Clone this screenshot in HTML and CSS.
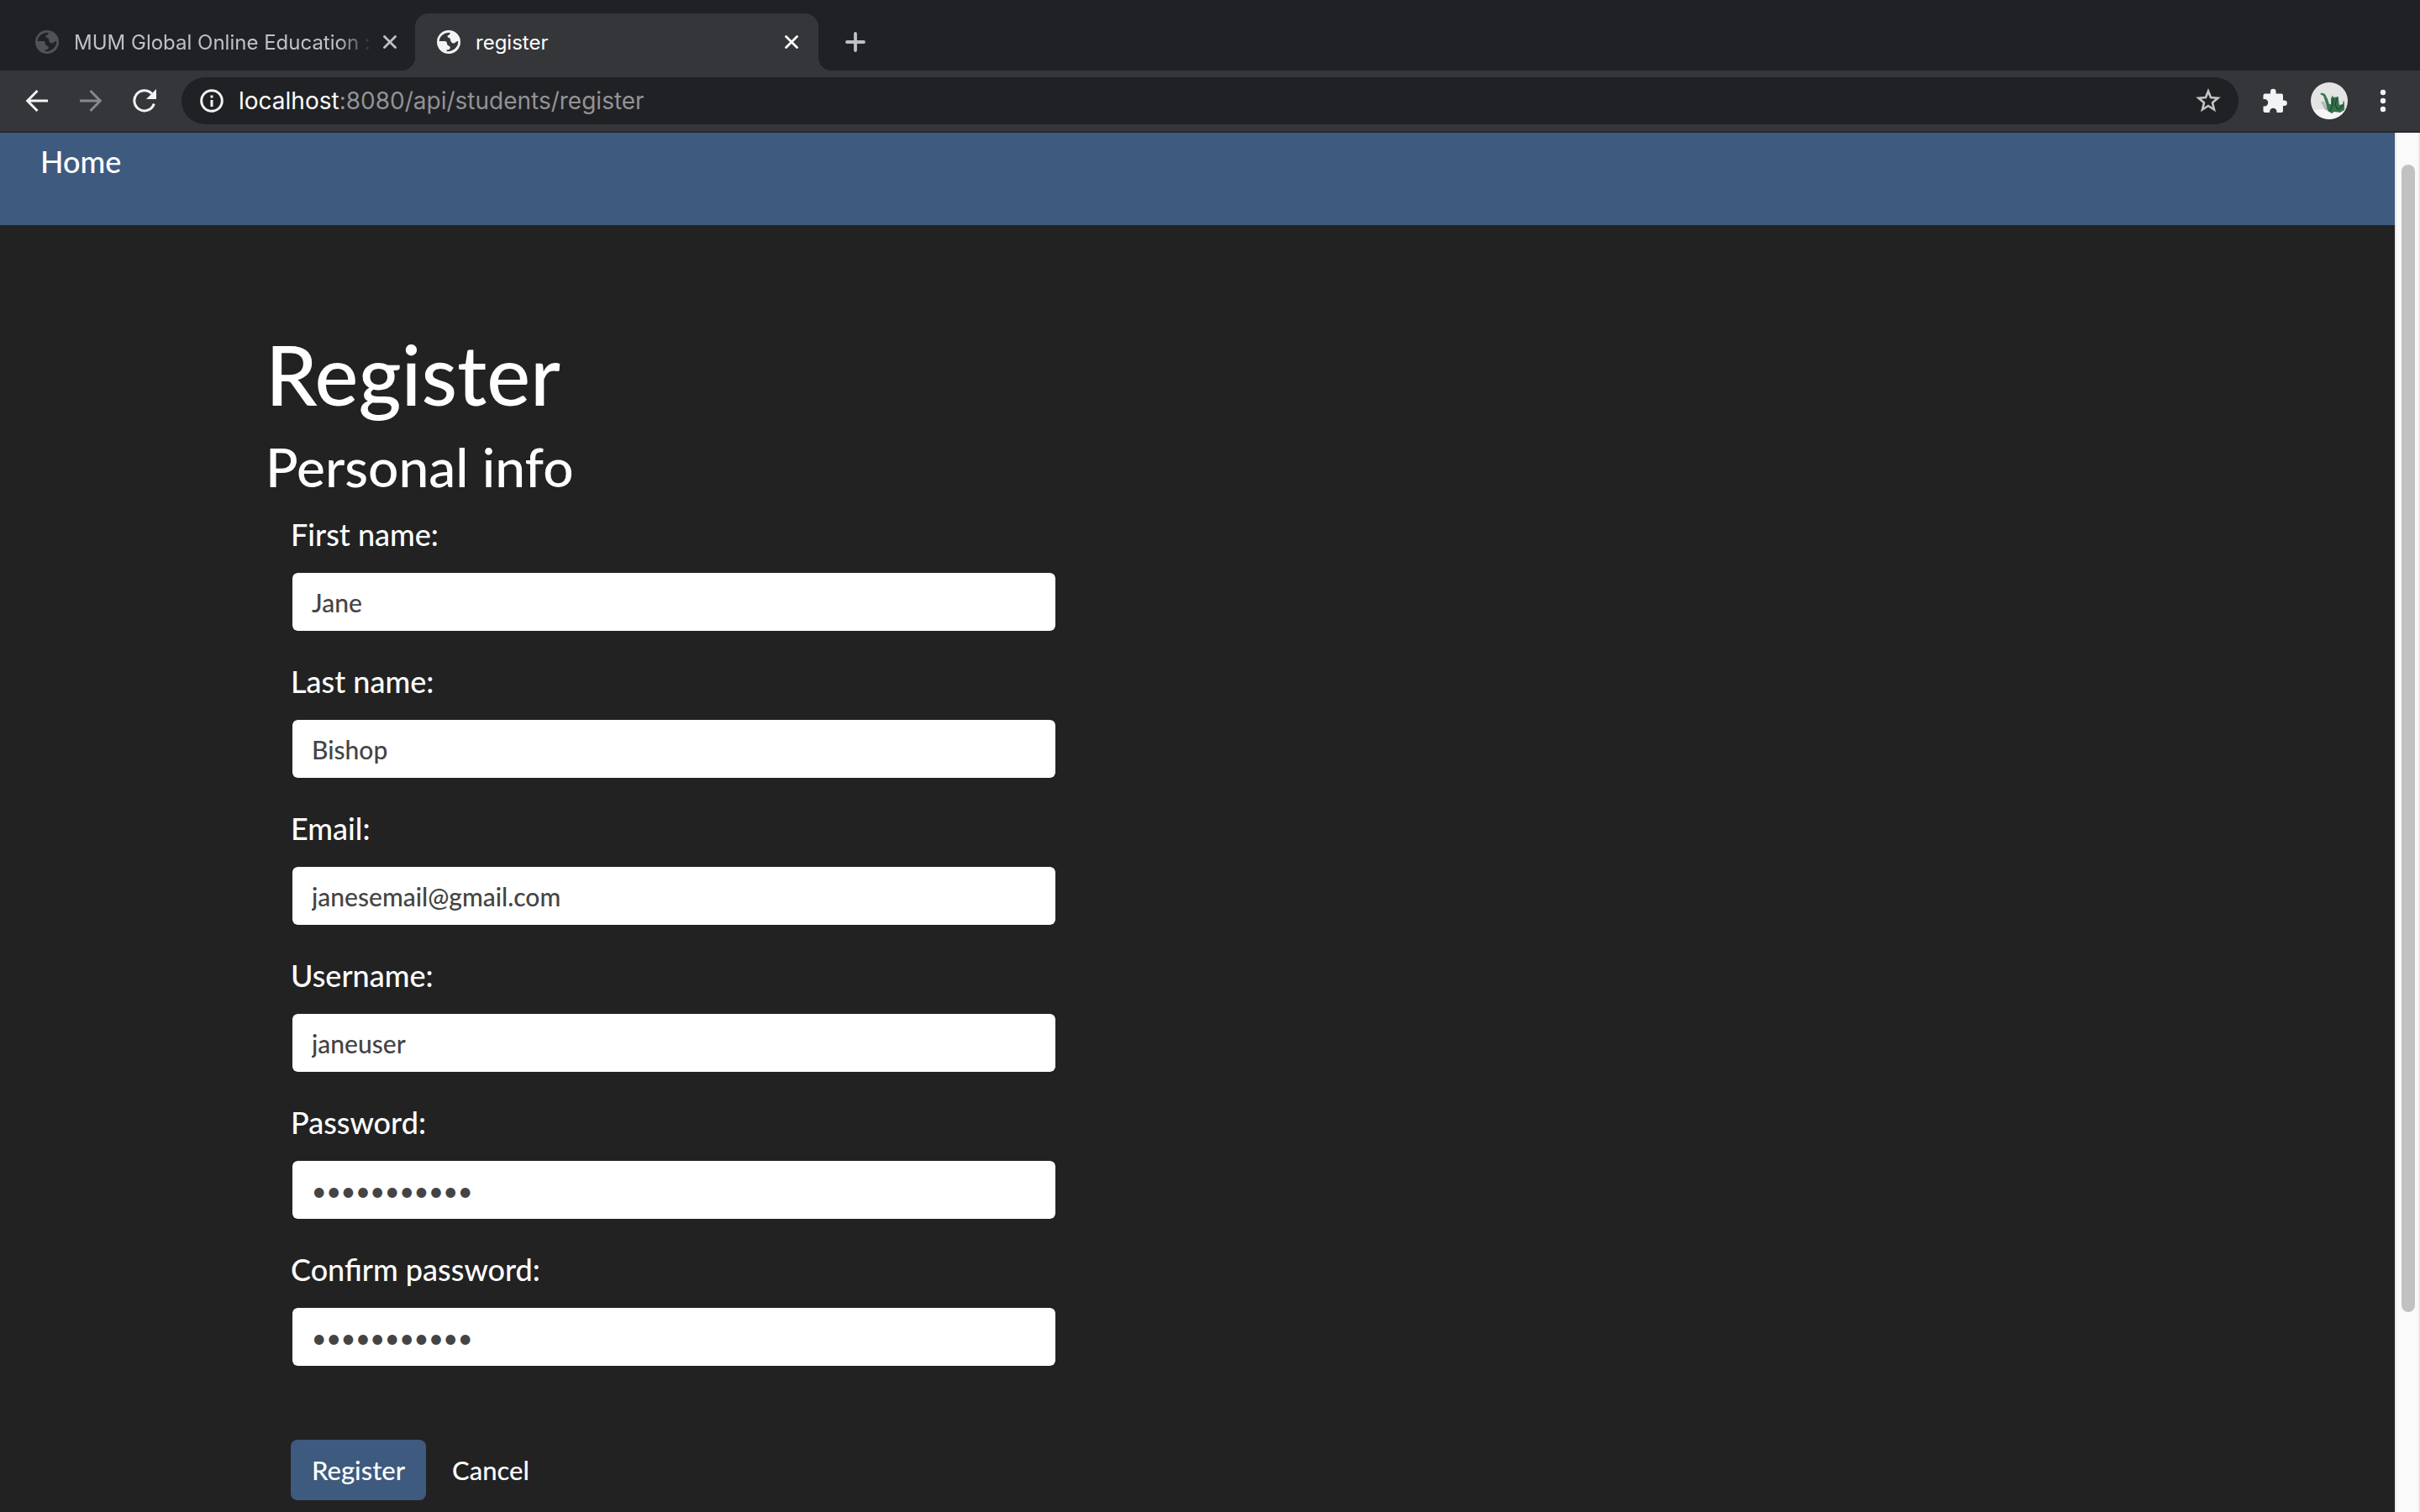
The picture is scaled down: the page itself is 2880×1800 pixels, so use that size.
FILE: index.html
```html
<!DOCTYPE html>
<html lang="en">
<head>
<meta charset="utf-8">
<title>register</title>
<link rel="stylesheet" href="styles.css">
</head>
<body>
<svg class="sprite" aria-hidden="true">
  <symbol id="globe" viewBox="0 0 28 28">
    <path fill-rule="evenodd" fill="currentColor" d="M14 0a14 14 0 1 0 0 28a14 14 0 0 0 0-28zM2.700 13C3 7 8 2.700 15.500 2.700V4.500C15 6 12.500 5.500 12.500 7.500C12.500 9.500 16 8.500 16 11C16 13.500 17.500 15.500 20 15.500C22 15.500 22.500 13 25.200 13C26 19 20 25.300 12 25.300L11.500 23.500C14.500 23.500 15.800 22.500 15.800 20.500C15.800 18 12 19 12 16C12 14 11 13 9 13z"/>
  </symbol>
  <symbol id="cross" viewBox="0 0 16 16">
    <path d="M1.500 1.500L14.500 14.500M14.500 1.500L1.500 14.500" fill="none" stroke="currentColor" stroke-width="2.800" stroke-linecap="round"/>
  </symbol>
</svg>
<div class="window">
  <header class="browser">
    <div class="tabs">
      <div class="tab">
        <svg class="favicon"><use href="#globe"/></svg>
        <span class="tab-title tab-title-faded">MUM Global Online Education :</span>
        <button class="icon-button tab-close" aria-label="Close tab"><svg class="cross"><use href="#cross"/></svg></button>
      </div>
      <div class="tab tab-active">
        <svg class="favicon"><use href="#globe"/></svg>
        <span class="tab-title">register</span>
        <button class="icon-button tab-close" aria-label="Close tab"><svg class="cross"><use href="#cross"/></svg></button>
      </div>
      <button class="icon-button new-tab" aria-label="New tab">
        <svg width="24" height="24" viewBox="0 0 24 24"><path d="M12 2V22M2 12H22" stroke="currentColor" stroke-width="3.800" stroke-linecap="round"/></svg>
      </button>
    </div>
    <div class="toolbar">
      <button class="icon-button" aria-label="Back">
        <svg width="28" height="28" viewBox="0 0 28 28"><path d="M27 14H3M14.500 2L2.700 14L14.500 26" fill="none" stroke="currentColor" stroke-width="3"/></svg>
      </button>
      <button class="icon-button forward" aria-label="Forward">
        <svg width="28" height="28" viewBox="0 0 28 28"><path d="M1 14H25M13.500 2L25.300 14L13.500 26" fill="none" stroke="currentColor" stroke-width="3"/></svg>
      </button>
      <button class="icon-button" aria-label="Reload">
        <svg width="28" height="28" viewBox="0 0 28 28"><path d="M25.300 17.500A12 12 0 1 1 22.500 5.500" fill="none" stroke="currentColor" stroke-width="3"/><path d="M28 0V12H16z" fill="currentColor"/></svg>
      </button>
      <div class="omnibox">
        <svg width="28" height="28" viewBox="0 0 28 28"><circle cx="14" cy="14" r="12.300" fill="none" stroke="currentColor" stroke-width="3"/><path d="M12.500 7.500h3v3h-3zM12.500 13h3v8h-3z" fill="currentColor"/></svg>
        <span class="url"><span class="host">localhost</span>:8080/api/students/register</span>
        <button class="icon-button star" aria-label="Bookmark">
          <svg width="32" height="32" viewBox="0 0 32 32"><path d="M16 4.500L19 12L27.500 12.700L21 18.200L23 26.500L16 22L9 26.500L11 18.200L4.500 12.700L13 12z" fill="none" stroke="currentColor" stroke-width="2.600"/></svg>
        </button>
      </div>
      <div class="tools">
        <button class="icon-button" aria-label="Extensions">
          <svg width="30" height="30" viewBox="0 0 30 30"><path fill="currentColor" d="M3.500 6.500H10V4a3.300 3.300 0 0 1 6.600 0V6.500H23q2 0 2 2V14.500H26.500a3.300 3.300 0 0 1 0 6.600H25V27q0 2-2 2H17.500V28a4.200 4.200 0 0 0-8.400 0V29H3.500q-2 0-2-2V21.500H3a4.200 4.200 0 0 0 0-8.400H1.500V8.500q0-2 2-2z"/></svg>
        </button>
        <button class="icon-button" aria-label="Profile">
          <svg width="44" height="44" viewBox="0 0 44 44"><circle cx="22" cy="22" r="22" fill="#e4e4e4"/><path d="M3 33Q22 30 41 33Q34 44 22 44Q9 44 3 33z" fill="#f5f5f5"/><path d="M12 24q4-3 5 1l3 8h-3l-3-6z" fill="#b4b8b6"/><path d="M11 14L13 12.500L17 14L20 20L22 26L24 26L24 19L26 15.500L27 18L33 17L33 20L34 27L38 26L39 21L40 25L40 33L35 36L28 35L25 37L20 34L18 25L15 16z" fill="#37744f"/><path d="M27 19L26 27L23 34M31 19L29 27L33 33M38 27L34 32" fill="none" stroke="#1f4a34" stroke-width="1.500"/></svg>
        </button>
        <button class="icon-button menu" aria-label="Menu">
          <svg width="8" height="28" viewBox="0 0 8 28"><circle cx="4" cy="4" r="3.200" fill="currentColor"/><circle cx="4" cy="14" r="3.200" fill="currentColor"/><circle cx="4" cy="24" r="3.200" fill="currentColor"/></svg>
        </button>
      </div>
    </div>
  </header>
  <div class="viewport">
    <div class="page">
      <nav class="navbar"><a href="#">Home</a></nav>
      <main class="content">
        <h1>Register</h1>
        <h2>Personal info</h2>
        <form class="form">
          <div class="field"><label for="first">First name:</label><input id="first" type="text" value="Jane"></div>
          <div class="field"><label for="last">Last name:</label><input id="last" type="text" value="Bishop"></div>
          <div class="field"><label for="email">Email:</label><input id="email" type="text" value="janesemail@gmail.com"></div>
          <div class="field"><label for="user">Username:</label><input id="user" type="text" value="janeuser"></div>
          <div class="field"><label for="pass">Password:</label><input id="pass" type="password" value="janepass123"></div>
          <div class="field"><label for="confirm">Confirm password:</label><input id="confirm" type="password" value="janepass123"></div>
          <div class="actions"><button class="btn btn-primary" type="submit">Register</button><a class="btn" href="#">Cancel</a></div>
        </form>
      </main>
    </div>
    <div class="scrollbar"><div class="thumb"></div></div>
  </div>
</div>
</body>
</html>
```
FILE: styles.css
```css
* { box-sizing: border-box; }

body {
  margin: 0;
  background: #222;
  color: #fff;
  font-family: Lato, "Liberation Sans", sans-serif;
  font-weight: 500;
}

a { color: inherit; text-decoration: none; }
svg { display: block; flex: none; }
.sprite { width: 0; height: 0; position: absolute; }

.window {
  display: flex;
  flex-direction: column;
  height: 100vh;
  overflow: hidden;
}

/* Browser chrome */
.browser {
  flex: none;
  background: #202124;
  color: #f1f3f4;
  font-family: Inter, "Liberation Sans", sans-serif;
  font-weight: 400;
  border-bottom: 2px solid #28292b;
}

.tabs {
  display: flex;
  height: 84px;
  padding: 16px 0 0 16px;
}

.tab {
  position: relative;
  display: flex;
  align-items: center;
  width: 478px;
  padding: 0 22px 0 26px;
  color: #bdc1c6;
  font-size: 24px;
}

.tab .favicon {
  width: 28px;
  height: 28px;
  color: #505256;
}

.tab-title {
  flex: 1;
  margin-left: 18px;
  white-space: nowrap;
}

.tab-title-faded {
  -webkit-mask-image: linear-gradient(to right, #000 88%, transparent);
  mask-image: linear-gradient(to right, #000 88%, transparent);
}

.tab-active {
  width: 480px;
  padding-right: 24px;
  background: #35363a;
  border-radius: 16px 16px 0 0;
  color: #fff;
}

.tab-active .favicon { color: #f1f3f4; }

/* Curved feet where the active tab meets the toolbar */
.tab-active::before,
.tab-active::after {
  content: "";
  position: absolute;
  bottom: 0;
  width: 16px;
  height: 16px;
}
.tab-active::before {
  left: -16px;
  background: radial-gradient(circle at 0 0, transparent 16px, #35363a 16px);
}
.tab-active::after {
  right: -16px;
  background: radial-gradient(circle at 100% 0, transparent 16px, #35363a 16px);
}

.icon-button {
  display: flex;
  flex: none;
  margin: 0;
  padding: 0;
  border: 0;
  background: none;
  color: inherit;
}

.cross { width: 16px; height: 16px; }
.tab-close { margin-left: 12px; }
.new-tab { align-self: center; margin-left: 32px; color: #bdc1c6; }

.toolbar {
  display: flex;
  align-items: center;
  gap: 36px;
  height: 72px;
  padding: 0 40px 0 30px;
  background: #35363a;
}

.forward { color: #87888b; }

.omnibox {
  display: flex;
  flex: 1;
  align-items: center;
  height: 56px;
  margin: 0 -8px 0 -6px;
  padding: 0 20px 0 22px;
  border-radius: 28px;
  background: #202124;
}

.url {
  flex: 1;
  margin-left: 18px;
  color: #919396;
  font-size: 28px;
}

.host { color: #fff; }
.star { color: #c4c4c4; }

.tools {
  display: flex;
  align-items: center;
  gap: 28px;
}

.menu { margin-left: 10px; }

/* Page */
.viewport {
  display: flex;
  flex: 1;
  min-height: 0;
}

.page {
  flex: 1;
  overflow: hidden;
}

.navbar {
  height: 110px;
  padding: 10px 48px;
  background: #3e5a7e;
  font-size: 36px;
  line-height: 48px;
}

.content { padding: 117px 316px 0; }

h1, h2 {
  margin: 0;
  font-weight: 500;
}
h1 { font-size: 98px; line-height: 120px; }
h2 { margin-top: 12px; font-size: 64px; line-height: 78px; }

.form {
  max-width: 942px;
  padding: 14px 0 0 30px;
}

.field {
  display: flex;
  flex-direction: column;
  height: 175px;
}

label {
  margin-bottom: 17px;
  font-size: 36px;
  line-height: 54px;
}

input {
  height: 73px;
  padding: 0 23px;
  border: 2px solid #222;
  border-radius: 8px;
  background: #fff;
  background-clip: padding-box;
  color: #444;
  font: 500 30px/44px Lato, "Liberation Sans", sans-serif;
}

.actions {
  display: flex;
  margin-top: 55px;
}

.btn {
  height: 72px;
  padding: 0 25px;
  border: 0;
  border-radius: 8px;
  background: none;
  color: #fff;
  font: 500 31px/72px Lato, "Liberation Sans", sans-serif;
}

.btn-primary { margin-right: 6px; background: #3e5a7e; }

.scrollbar {
  flex: none;
  width: 30px;
  padding: 38px 4px 238px 6px;
  border: solid #e8e8e8;
  border-width: 0 2px;
  background: #fafafa;
}

.thumb {
  width: 16px;
  height: 100%;
  border-radius: 8px;
  background: #c1c1c1;
}
```
